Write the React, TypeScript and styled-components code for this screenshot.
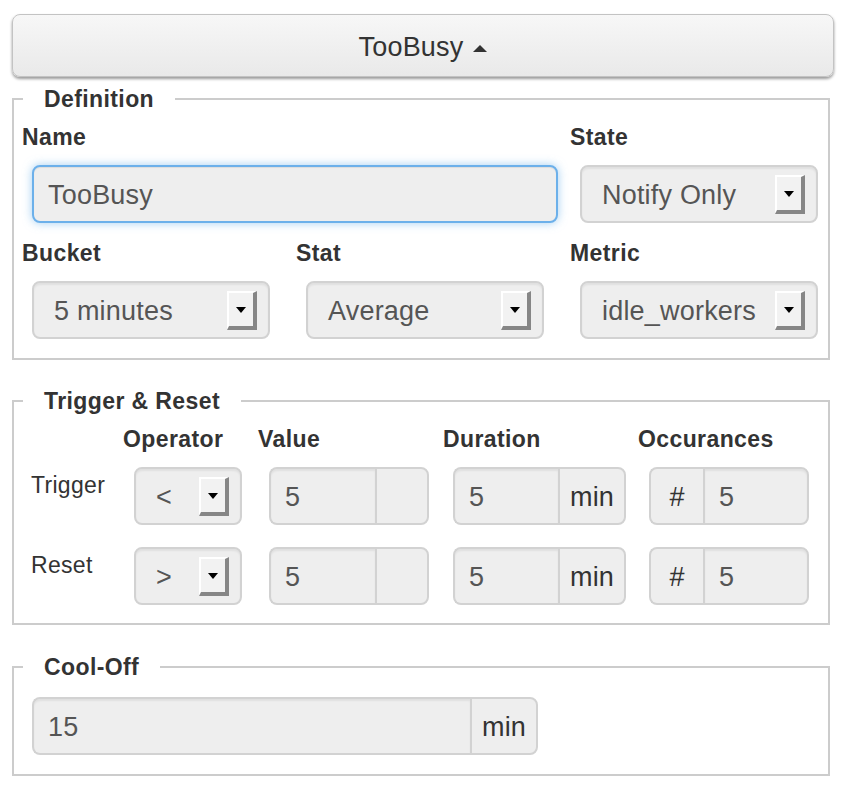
import React from 'react';
import styled, { createGlobalStyle, css } from 'styled-components';

const Global = createGlobalStyle`
  html, body { margin: 0; padding: 0; background: #fff; }
  body { font-family: "Liberation Sans", Arial, Helvetica, sans-serif; color: #333; }
  * { box-sizing: border-box; }
`;

const Page = styled.div`
  padding: 14px 0 16px 12px;
  width: 846px;
`;

const ToggleButton = styled.button`
  display: flex;
  align-items: center;
  justify-content: center;
  gap: 10px;
  width: 822px;
  height: 63px;
  padding: 3px 0 0 0;
  border: 1px solid #c3c3c3;
  border-radius: 8px;
  background: linear-gradient(#f7f7f7, #e9e9e9);
  box-shadow: 0 2px 3px rgba(0, 0, 0, 0.4);
  font: 27px "Liberation Sans", Arial, sans-serif;
  letter-spacing: 0.2px;
  color: #333;
`;

const Caret = styled.span`
  width: 0;
  height: 0;
  border-left: 7.5px solid transparent;
  border-right: 7.5px solid transparent;
  border-bottom: 7px solid #333;
  margin-top: 3px;
`;

const Fieldset = styled.fieldset<{ $top: number; $bottom: number }>`
  margin: ${p => p.$top}px 0 0 0;
  width: 818px;
  min-width: 0;
  border: 2px solid #cccccc;
  padding: 0 0 ${p => p.$bottom}px 8px;
`;

const Legend = styled.legend`
  margin-left: 1px;
  padding: 0 21px;
  font-size: 23px;
  font-weight: bold;
  letter-spacing: 0.4px;
  line-height: 28px;
  color: #333;
`;

const DefGrid = styled.div`
  display: grid;
  grid-template-columns: 274px 274px 258px;
  row-gap: 16px;
  margin-top: 10px;
`;

const Field = styled.div<{ $span?: number }>`
  grid-column: span ${p => p.$span ?? 1};
  display: flex;
  flex-direction: column;
  align-items: flex-start;
  gap: 14px;
`;

const Label = styled.label`
  display: block;
  font-size: 23px;
  font-weight: bold;
  letter-spacing: 0.4px;
  line-height: 28px;
  color: #333;
`;

const controlBase = css`
  height: 58px;
  border: 2px solid #d2d2d2;
  background: #eeeeee;
  font: 27px "Liberation Sans", Arial, sans-serif;
  letter-spacing: 0.2px;
  color: #555;
  box-shadow: inset 0 2px 2px rgba(0, 0, 0, 0.06);
`;

const TextInput = styled.input<{ $w: number; $focus?: boolean }>`
  ${controlBase};
  width: ${p => p.$w}px;
  margin-left: 10px;
  border-radius: 8px;
  padding: 3px 0 0 14px;
  outline: none;
  ${p =>
    p.$focus &&
    css`
      border-color: #6cb0ea;
      box-shadow: inset 0 1px 1px rgba(0, 0, 0, 0.075), 0 0 10px rgba(102, 175, 233, 0.6);
    `}
`;

const SelectBox = styled.div<{ $w: number; $ml?: number }>`
  ${controlBase};
  width: ${p => p.$w}px;
  margin-left: ${p => p.$ml ?? 10}px;
  border-radius: 8px;
  display: flex;
  align-items: center;
  justify-content: space-between;
  padding: 0 11px 0 20px;
  white-space: nowrap;
`;

const SelectText = styled.span`
  padding-top: 2px;
`;

const DropButton = styled.span`
  position: relative;
  flex: none;
  width: 30px;
  height: 39px;
  margin-top: 1px;
  background: #f2f2f2;
  border-top: 2px solid #ffffff;
  border-left: 2px solid #ffffff;
  border-right: 4px solid #868686;
  border-bottom: 4px solid #868686;
  &::after {
    content: '';
    position: absolute;
    left: 50%;
    top: 50%;
    margin: -3px 0 0 -5px;
    border-left: 5px solid transparent;
    border-right: 5px solid transparent;
    border-top: 6px solid #000;
  }
`;

const Group = styled.div<{ $ml?: number }>`
  display: flex;
  margin-left: ${p => p.$ml ?? 11}px;
`;

const GroupInput = styled.input<{ $w: number; $side: 'left' | 'right' }>`
  ${controlBase};
  width: ${p => p.$w}px;
  padding: 3px 0 0 14px;
  outline: none;
  ${p =>
    p.$side === 'left'
      ? css`
          border-radius: 8px 0 0 8px;
          border-right: none;
        `
      : css`
          border-radius: 0 8px 8px 0;
        `}
`;

const Addon = styled.span<{ $w: number; $side: 'left' | 'right' }>`
  ${controlBase};
  box-shadow: none;
  width: ${p => p.$w}px;
  display: flex;
  align-items: center;
  justify-content: center;
  padding-top: 3px;
  color: #333;
  ${p =>
    p.$side === 'right'
      ? css`
          border-radius: 0 8px 8px 0;
        `
      : css`
          border-radius: 8px 0 0 8px;
          border-right: none;
        `}
`;

const TRRow = styled.div<{ $mb?: number; $mt?: number }>`
  display: grid;
  grid-template-columns: 101px 135px 185px 195px 180px;
  align-items: start;
  margin-top: ${p => p.$mt ?? 0}px;
  margin-bottom: ${p => p.$mb ?? 0}px;
`;

const RowLabel = styled.div`
  padding: 4px 0 0 9px;
  font-size: 23px;
  letter-spacing: 0.3px;
  line-height: 28px;
  color: #333;
`;

const CoolGroup = styled(Group)`
  margin-top: 16px;
  margin-left: 10px;
`;

type Op = { label: string; op: string };

const rows: Op[] = [
  { label: 'Trigger', op: '<' },
  { label: 'Reset', op: '>' },
];

const Select: React.FC<{ w: number; value: string; ml?: number }> = ({ w, value, ml }) => (
  <SelectBox $w={w} $ml={ml}>
    <SelectText>{value}</SelectText>
    <DropButton />
  </SelectBox>
);

export default function App() {
  return (
    <>
      <Global />
      <Page>
        <ToggleButton>
          TooBusy
          <Caret />
        </ToggleButton>

        <Fieldset $top={8} $bottom={19}>
          <Legend>Definition</Legend>
          <DefGrid>
            <Field $span={2}>
              <Label>Name</Label>
              <TextInput $w={526} $focus readOnly value="TooBusy" />
            </Field>
            <Field>
              <Label>State</Label>
              <Select w={238} value="Notify Only" />
            </Field>
            <Field>
              <Label>Bucket</Label>
              <Select w={238} value="5 minutes" />
            </Field>
            <Field>
              <Label>Stat</Label>
              <Select w={238} value="Average" />
            </Field>
            <Field>
              <Label>Metric</Label>
              <Select w={238} value="idle_workers" />
            </Field>
          </DefGrid>
        </Fieldset>

        <Fieldset $top={27} $bottom={18}>
          <Legend>Trigger &amp; Reset</Legend>
          <TRRow $mt={10} $mb={14}>
            <span />
            <Label>Operator</Label>
            <Label>Value</Label>
            <Label>Duration</Label>
            <Label>Occurances</Label>
          </TRRow>
          {rows.map((r, i) => (
            <TRRow key={r.label} $mb={i === 0 ? 22 : 0}>
              <RowLabel>{r.label}</RowLabel>
              <Select w={108} value={r.op} ml={11} />
              <Group>
                <GroupInput $w={106} $side="left" readOnly value="5" />
                <Addon $w={54} $side="right" />
              </Group>
              <Group $ml={10}>
                <GroupInput $w={105} $side="left" readOnly value="5" />
                <Addon $w={68} $side="right">min</Addon>
              </Group>
              <Group>
                <Addon $w={54} $side="left">#</Addon>
                <GroupInput $w={106} $side="right" readOnly value="5" />
              </Group>
            </TRRow>
          ))}
        </Fieldset>

        <Fieldset $top={28} $bottom={19}>
          <Legend>Cool-Off</Legend>
          <CoolGroup>
            <GroupInput $w={438} $side="left" readOnly value="15" />
            <Addon $w={68} $side="right">min</Addon>
          </CoolGroup>
        </Fieldset>
      </Page>
    </>
  );
}
